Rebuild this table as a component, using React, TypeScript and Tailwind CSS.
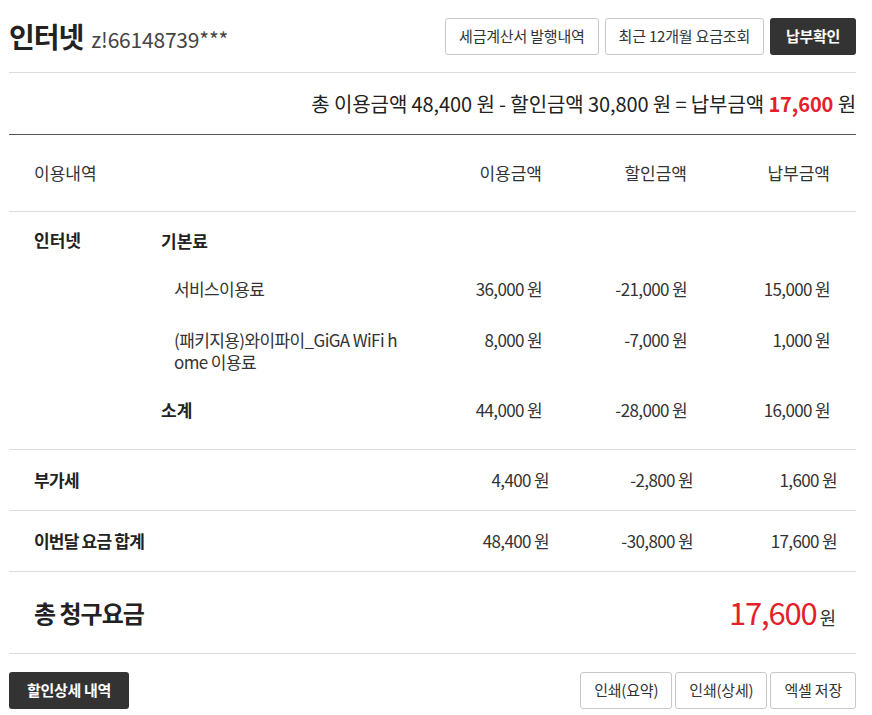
const FONT = "font-['Noto_Sans_CJK_KR','Noto_Sans',sans-serif]";

function Won({ v, className = "" }: { v: string; className?: string }) {
  return (
    <span className={"whitespace-nowrap tracking-[-0.6px] " + className}>
      {v}
      <span className="ml-[3px]">원</span>
    </span>
  );
}

function OutlineBtn({ children }: { children: React.ReactNode }) {
  return (
    <button className="h-[37px] rounded-[3px] border border-[#c8c8c8] bg-white px-[13px] text-[15px] tracking-[-0.2px] text-[#333]">
      {children}
    </button>
  );
}

function DarkBtn({ children, wide = false }: { children: React.ReactNode; wide?: boolean }) {
  return (
    <button
      className={
        "h-[37px] rounded-[3px] bg-[#333] text-[15px] font-bold tracking-[-0.3px] text-white " +
        (wide ? "px-[18px]" : "px-[16px]")
      }
    >
      {children}
    </button>
  );
}

const mainCols = "grid grid-cols-[152px_269px_112px_145px_143px] pr-[26px]";
const sumCols = "grid grid-cols-[1fr_144px_144px_144px] pr-[19px]";

const items = [
  { name: "서비스이용료", use: "36,000", dc: "-21,000", pay: "15,000", mt: "mt-[26px]" },
  {
    name: "(패키지용)와이파이_GiGA WiFi home 이용료",
    use: "8,000",
    dc: "-7,000",
    pay: "1,000",
    mt: "mt-[29px]",
  },
];

export default function App() {
  return (
    <div className={FONT + " w-[872px] bg-white text-[#333]"}>
      <div className="pl-[9px] pr-[16px]">
        {/* header */}
        <div className="flex h-[73px] items-center justify-between border-b border-[#dcdcdc]">
          <div className="flex items-baseline gap-[8px]">
            <h1 className="text-[28px] font-bold tracking-[-1px] text-[#222]">인터넷</h1>
            <span className="text-[21px] tracking-[-0.2px] text-[#444]">z!66148739***</span>
          </div>
          <div className="flex gap-[6px]">
            <OutlineBtn>세금계산서 발행내역</OutlineBtn>
            <OutlineBtn>최근 12개월 요금조회</OutlineBtn>
            <DarkBtn>납부확인</DarkBtn>
          </div>
        </div>

        {/* summary */}
        <div className="flex h-[62px] items-center justify-end border-b border-[#555] text-[20px] tracking-[-0.1px] text-[#222]">
          총 이용금액 48,400 원 - 할인금액 30,800 원 = 납부금액&nbsp;
          <span className="font-bold text-[#e4202b]">17,600</span>&nbsp;원
        </div>

        {/* table head */}
        <div className={mainCols + " h-[77px] items-center border-b border-[#dcdcdc] text-[17px] text-[#333]"}>
          <div className="pl-[25px]">이용내역</div>
          <div />
          <div className="text-right">이용금액</div>
          <div className="text-right">할인금액</div>
          <div className="text-right">납부금액</div>
        </div>

        {/* internet section */}
        <div className={mainCols + " border-b border-[#dcdcdc] pb-[28px] pt-[17px] text-[17px] leading-[22px]"}>
          <div className="pl-[25px] font-bold text-[#222]">인터넷</div>
          <div className="col-span-4 flex flex-col">
            <div className="pt-[1px] font-bold text-[#222]">기본료</div>
            {items.map((it) => (
              <div key={it.name} className={"grid grid-cols-[269px_112px_145px_143px] " + it.mt}>
                <div className="break-all pl-[13px] pr-[26px] tracking-[-0.6px]">{it.name}</div>
                <div className="text-right">
                  <Won v={it.use} />
                </div>
                <div className="text-right">
                  <Won v={it.dc} />
                </div>
                <div className="text-right">
                  <Won v={it.pay} />
                </div>
              </div>
            ))}
            <div className="mt-[26px] grid grid-cols-[269px_112px_145px_143px]">
              <div className="font-bold text-[#222]">소계</div>
              <div className="text-right">
                <Won v="44,000" />
              </div>
              <div className="text-right">
                <Won v="-28,000" />
              </div>
              <div className="text-right">
                <Won v="16,000" />
              </div>
            </div>
          </div>
        </div>

        {/* vat */}
        <div className={sumCols + " h-[61px] items-center border-b border-[#dcdcdc] text-[17px]"}>
          <div className="pl-[25px] font-bold tracking-[-0.6px] text-[#222]">부가세</div>
          <div className="text-right">
            <Won v="4,400" />
          </div>
          <div className="text-right">
            <Won v="-2,800" />
          </div>
          <div className="text-right">
            <Won v="1,600" />
          </div>
        </div>

        {/* month total */}
        <div className={sumCols + " h-[61px] items-center border-b border-[#dcdcdc] text-[17px]"}>
          <div className="pl-[25px] font-bold tracking-[-0.8px] text-[#222]">이번달 요금 합계</div>
          <div className="text-right">
            <Won v="48,400" />
          </div>
          <div className="text-right">
            <Won v="-30,800" />
          </div>
          <div className="text-right">
            <Won v="17,600" />
          </div>
        </div>

        {/* grand total */}
        <div className="flex h-[82px] items-center justify-between border-b border-[#dcdcdc] pl-[25px] pr-[20px]">
          <div className="text-[24px] font-bold tracking-[-1px] text-[#222]">총 청구요금</div>
          <div className="flex items-baseline">
            <span className="text-[31px] tracking-[-1.2px] text-[#e4202b]">17,600</span>
            <span className="ml-[3px] text-[18px] text-[#333]">원</span>
          </div>
        </div>

        {/* footer buttons */}
        <div className="flex items-center justify-between pt-[18px]">
          <DarkBtn wide>할인상세 내역</DarkBtn>
          <div className="flex gap-[3px]">
            <OutlineBtn>인쇄(요약)</OutlineBtn>
            <OutlineBtn>인쇄(상세)</OutlineBtn>
            <OutlineBtn>엑셀 저장</OutlineBtn>
          </div>
        </div>
      </div>
    </div>
  );
}
